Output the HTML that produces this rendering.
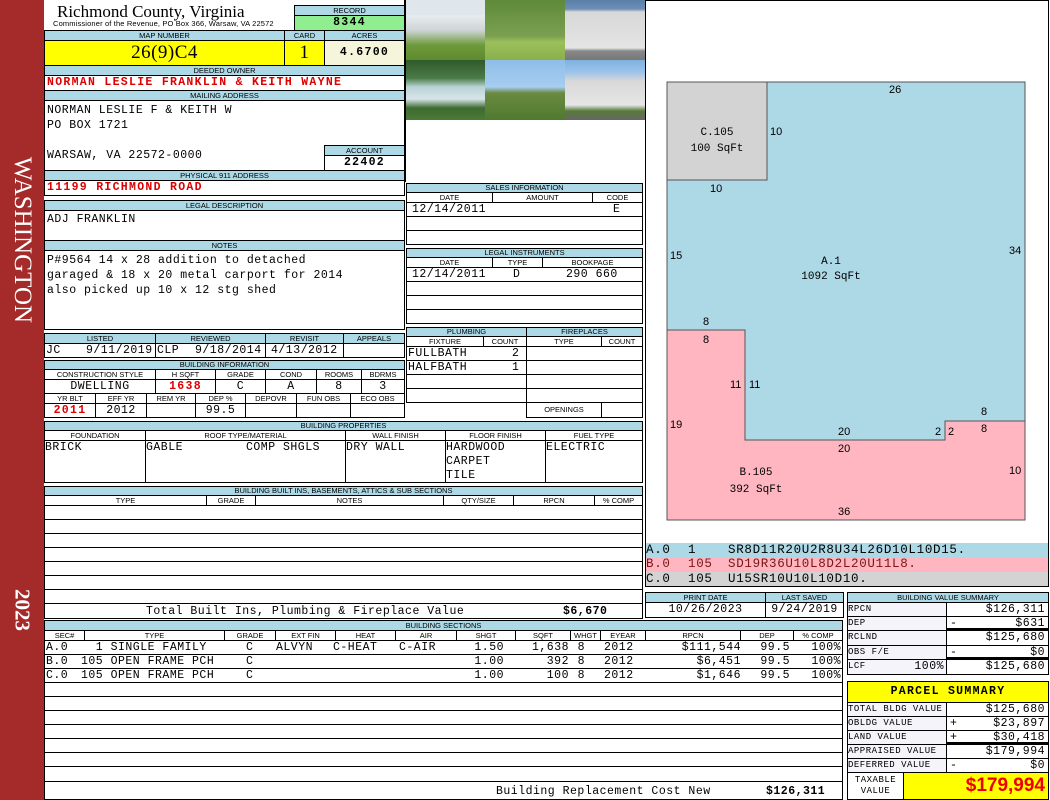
<!DOCTYPE html>
<html><head><meta charset="utf-8"><style>
*{margin:0;padding:0;box-sizing:border-box}
body{width:1050px;height:800px;position:relative;background:#fff;overflow:hidden;font-family:"Liberation Mono",monospace}
.a{position:absolute}
.h{position:absolute;background:#add8e6;border:1px solid #000;font:7.5px/8px "Liberation Sans",sans-serif;text-align:center;color:#000;overflow:hidden;white-space:nowrap}
.v{position:absolute;border:1px solid #000;background:#fff;font:11.5px/13px "Liberation Mono",monospace;letter-spacing:.5px;white-space:pre;overflow:hidden;color:#000}
.r{color:#d00;font-weight:bold;letter-spacing:1.3px}
.c{text-align:center}.rt{text-align:right;padding-right:3px}
.p{position:absolute;font:11.5px/13px "Liberation Mono",monospace;letter-spacing:.5px;white-space:pre}
.pr{position:absolute;font:11.5px/13px "Liberation Mono",monospace;letter-spacing:.5px;white-space:pre;text-align:right}
.k{position:absolute;font:12.5px/13px "Liberation Mono",monospace;letter-spacing:.7px;white-space:pre}
.lb{font-size:9px;background:#f4f4fa}
</style></head><body>
<!-- sidebar -->
<div class="a" style="left:0;top:0;width:44px;height:800px;background:#a52a2a"></div>
<div class="a" style="left:22px;top:240px;transform:translate(-50%,-50%) rotate(90deg);color:#fff;font:25px 'Liberation Serif',serif;white-space:nowrap">WASHINGTON</div>
<div class="a" style="left:22px;top:610px;transform:translate(-50%,-50%) rotate(90deg);color:#fff;font:bold 21px 'Liberation Serif',serif;white-space:nowrap">2023</div>

<!-- header -->
<div class="a" style="left:57px;top:2px;font:17px 'Liberation Serif',serif">Richmond County, Virginia</div>
<div class="a" style="left:53px;top:19px;font:7.5px 'Liberation Sans',sans-serif;letter-spacing:.15px;white-space:nowrap">Commissioner of the Revenue, PO Box 366, Warsaw, VA 22572</div>
<div class="h" style="left:294px;top:5px;width:111px;height:11px;line-height:9px">RECORD</div>
<div class="v c" style="left:294px;top:15px;width:111px;height:16px;background:#90ee90;font-weight:bold;line-height:14px;letter-spacing:1.3px">8344</div>
<div class="h" style="left:44px;top:30px;width:241px;height:11px;line-height:9px">MAP NUMBER</div>
<div class="h" style="left:284px;top:30px;width:41px;height:11px;line-height:9px">CARD</div>
<div class="h" style="left:324px;top:30px;width:81px;height:11px;line-height:9px">ACRES</div>
<div class="v c" style="left:44px;top:40px;width:241px;height:26px;background:#ffff00;font:19px/24px 'Liberation Serif',serif">26(9)C4</div>
<div class="v c" style="left:284px;top:40px;width:41px;height:26px;background:#ffff00;font:19px/24px 'Liberation Serif',serif">1</div>
<div class="v c" style="left:324px;top:40px;width:81px;height:26px;background:#f5f5dc;font-weight:bold;line-height:24px;letter-spacing:1.3px">4.6700</div>
<div class="h" style="left:44px;top:65px;width:361px;height:11px;line-height:9px">DEEDED OWNER</div>
<div class="v r" style="left:44px;top:75px;width:361px;height:16px;padding-left:2px">NORMAN LESLIE FRANKLIN &amp; KEITH WAYNE</div>
<div class="h" style="left:44px;top:90px;width:361px;height:11px;line-height:9px">MAILING ADDRESS</div>
<div class="v" style="left:44px;top:100px;width:361px;height:71px;padding:2px 0 0 2px;line-height:15px">NORMAN LESLIE F &amp; KEITH W
PO BOX 1721

WARSAW, VA 22572-0000</div>
<div class="h" style="left:324px;top:145px;width:81px;height:11px;line-height:9px">ACCOUNT</div>
<div class="v c" style="left:324px;top:155px;width:81px;height:16px;font-weight:bold;letter-spacing:1.3px">22402</div>
<div class="h" style="left:44px;top:170px;width:361px;height:11px;line-height:9px">PHYSICAL 911 ADDRESS</div>
<div class="v r" style="left:44px;top:180px;width:361px;height:16px;padding-left:2px">11199 RICHMOND ROAD</div>
<div class="h" style="left:44px;top:200px;width:361px;height:11px;line-height:9px">LEGAL DESCRIPTION</div>
<div class="v" style="left:44px;top:210px;width:361px;height:31px;padding:2px">ADJ FRANKLIN</div>
<div class="h" style="left:44px;top:240px;width:361px;height:11px;line-height:9px">NOTES</div>
<div class="v" style="left:44px;top:250px;width:361px;height:80px;padding:2px;line-height:15px">P#9564 14 x 28 addition to detached
garaged &amp; 18 x 20 metal carport for 2014
also picked up 10 x 12 stg shed</div>

<!-- listed -->
<div class="h" style="left:44px;top:333px;width:112px;height:11px;line-height:9px">LISTED</div>
<div class="h" style="left:155px;top:333px;width:111px;height:11px;line-height:9px">REVIEWED</div>
<div class="h" style="left:265px;top:333px;width:79px;height:11px;line-height:9px">REVISIT</div>
<div class="h" style="left:343px;top:333px;width:62px;height:11px;line-height:9px">APPEALS</div>
<div class="v" style="left:44px;top:343px;width:112px;height:15px"></div>
<div class="v" style="left:155px;top:343px;width:111px;height:15px"></div>
<div class="v" style="left:265px;top:343px;width:79px;height:15px"></div>
<div class="v" style="left:343px;top:343px;width:62px;height:15px"></div>
<div class="p" style="left:46px;top:344px">JC</div>
<div class="p" style="left:86px;top:344px">9/11/2019</div>
<div class="p" style="left:157px;top:344px">CLP</div>
<div class="p" style="left:195px;top:344px">9/18/2014</div>
<div class="p" style="left:271px;top:344px">4/13/2012</div>

<div class="h" style="left:44px;top:360px;width:361px;height:10px">BUILDING INFORMATION</div>
<div class="h" style="left:44px;top:369px;width:112px;height:11px;background:#fff;line-height:9px">CONSTRUCTION STYLE</div>
<div class="h" style="left:155px;top:369px;width:61px;height:11px;background:#fff;line-height:9px">H SQFT</div>
<div class="h" style="left:215px;top:369px;width:51px;height:11px;background:#fff;line-height:9px">GRADE</div>
<div class="h" style="left:265px;top:369px;width:52px;height:11px;background:#fff;line-height:9px">COND</div>
<div class="h" style="left:316px;top:369px;width:46px;height:11px;background:#fff;line-height:9px">ROOMS</div>
<div class="h" style="left:361px;top:369px;width:44px;height:11px;background:#fff;line-height:9px">BDRMS</div>
<div class="v c" style="left:44px;top:379px;width:112px;height:15px">DWELLING</div>
<div class="v c r" style="left:155px;top:379px;width:61px;height:15px">1638</div>
<div class="v c" style="left:215px;top:379px;width:51px;height:15px">C</div>
<div class="v c" style="left:265px;top:379px;width:52px;height:15px">A</div>
<div class="v c" style="left:316px;top:379px;width:46px;height:15px">8</div>
<div class="v c" style="left:361px;top:379px;width:44px;height:15px">3</div>
<div class="h" style="left:44px;top:393px;width:52px;height:11px;background:#fff;line-height:9px">YR BLT</div>
<div class="h" style="left:95px;top:393px;width:52px;height:11px;background:#fff;line-height:9px">EFF YR</div>
<div class="h" style="left:146px;top:393px;width:50px;height:11px;background:#fff;line-height:9px">REM YR</div>
<div class="h" style="left:195px;top:393px;width:51px;height:11px;background:#fff;line-height:9px">DEP %</div>
<div class="h" style="left:245px;top:393px;width:52px;height:11px;background:#fff;line-height:9px">DEPOVR</div>
<div class="h" style="left:296px;top:393px;width:55px;height:11px;background:#fff;line-height:9px">FUN OBS</div>
<div class="h" style="left:350px;top:393px;width:55px;height:11px;background:#fff;line-height:9px">ECO OBS</div>
<div class="v c r" style="left:44px;top:403px;width:52px;height:15px">2011</div>
<div class="v c" style="left:95px;top:403px;width:52px;height:15px">2012</div>
<div class="v" style="left:146px;top:403px;width:50px;height:15px"></div>
<div class="v c" style="left:195px;top:403px;width:51px;height:15px">99.5</div>
<div class="v" style="left:245px;top:403px;width:52px;height:15px"></div>
<div class="v" style="left:296px;top:403px;width:55px;height:15px"></div>
<div class="v" style="left:350px;top:403px;width:55px;height:15px"></div>

<!-- photos -->
<div class="a" style="left:405px;top:0;width:80px;height:60px;background:linear-gradient(#dfe6ec 0,#dfe6ec 25%,#e8ecee 25%,#cfd6d8 50%,#6e9a3a 75%,#5f8b2f)"></div>
<div class="a" style="left:485px;top:0;width:80px;height:60px;background:linear-gradient(#5e8a3a,#7aa050 60%,#9cbf5a 70%,#8ab04e)"></div>
<div class="a" style="left:565px;top:0;width:80px;height:60px;background:linear-gradient(#5a7fa8 0,#6d8fb5 15%,#d8d8d8 20%,#e4e4e4 80%,#888 85%,#777)"></div>
<div class="a" style="left:405px;top:60px;width:80px;height:60px;background:linear-gradient(#2f5a2a,#4a7a45 30%,#b8d4d6 45%,#d8e4e8 65%,#3d6b30 80%,#4c7a38)"></div>
<div class="a" style="left:485px;top:60px;width:80px;height:60px;background:linear-gradient(#8fbde8,#a7cdef 45%,#6a8a40 55%,#4f7a30)"></div>
<div class="a" style="left:565px;top:60px;width:80px;height:60px;background:linear-gradient(#7fb1e0,#9cc3ea 20%,#d8d8d8 35%,#e6e6e6 75%,#587a38 85%,#666)"></div>
<div class="a" style="left:404px;top:0;width:2px;height:182px;background:#000"></div>

<!-- sales -->
<div class="h" style="left:406px;top:183px;width:237px;height:10px">SALES INFORMATION</div>
<div class="h" style="left:406px;top:192px;width:87px;height:11px;background:#fff;line-height:9px">DATE</div>
<div class="h" style="left:492px;top:192px;width:101px;height:11px;background:#fff;line-height:9px">AMOUNT</div>
<div class="h" style="left:592px;top:192px;width:51px;height:11px;background:#fff;line-height:9px">CODE</div>
<div class="v" style="left:406px;top:202px;width:237px;height:15px"></div>
<div class="p" style="left:412px;top:203px">12/14/2011</div>
<div class="p" style="left:613px;top:203px">E</div>
<div class="v" style="left:406px;top:216px;width:237px;height:15px"></div>
<div class="v" style="left:406px;top:230px;width:237px;height:15px"></div>
<div class="h" style="left:406px;top:248px;width:237px;height:10px">LEGAL INSTRUMENTS</div>
<div class="h" style="left:406px;top:257px;width:87px;height:11px;background:#fff;line-height:9px">DATE</div>
<div class="h" style="left:492px;top:257px;width:51px;height:11px;background:#fff;line-height:9px">TYPE</div>
<div class="h" style="left:542px;top:257px;width:101px;height:11px;background:#fff;line-height:9px">BOOKPAGE</div>
<div class="v" style="left:406px;top:267px;width:237px;height:15px"></div>
<div class="p" style="left:412px;top:268px">12/14/2011</div>
<div class="p" style="left:513px;top:268px">D</div>
<div class="p" style="left:566px;top:268px">290 660</div>
<div class="v" style="left:406px;top:281px;width:237px;height:15px"></div>
<div class="v" style="left:406px;top:295px;width:237px;height:15px"></div>
<div class="v" style="left:406px;top:309px;width:237px;height:15px"></div>

<!-- plumbing -->
<div class="h" style="left:406px;top:327px;width:121px;height:10px">PLUMBING</div>
<div class="h" style="left:526px;top:327px;width:117px;height:10px">FIREPLACES</div>
<div class="h" style="left:406px;top:336px;width:78px;height:11px;background:#fff;line-height:9px">FIXTURE</div>
<div class="h" style="left:483px;top:336px;width:44px;height:11px;background:#fff;line-height:9px">COUNT</div>
<div class="h" style="left:526px;top:336px;width:76px;height:11px;background:#fff;line-height:9px">TYPE</div>
<div class="h" style="left:601px;top:336px;width:42px;height:11px;background:#fff;line-height:9px">COUNT</div>
<div class="v" style="left:406px;top:346px;width:121px;height:15px"></div>
<div class="v" style="left:406px;top:360px;width:121px;height:15px"></div>
<div class="p" style="left:408px;top:347px">FULLBATH</div><div class="p" style="left:512px;top:347px">2</div>
<div class="p" style="left:408px;top:361px">HALFBATH</div><div class="p" style="left:512px;top:361px">1</div>
<div class="v" style="left:406px;top:374px;width:121px;height:15px"></div>
<div class="v" style="left:406px;top:388px;width:121px;height:15px"></div>
<div class="v" style="left:526px;top:346px;width:117px;height:15px"></div>
<div class="v" style="left:526px;top:360px;width:117px;height:15px"></div>
<div class="v" style="left:526px;top:374px;width:117px;height:15px"></div>
<div class="v" style="left:526px;top:388px;width:117px;height:15px"></div>
<div class="h" style="left:526px;top:402px;width:76px;height:16px;background:#fff;line-height:14px">OPENINGS</div>
<div class="v" style="left:601px;top:402px;width:42px;height:16px"></div>

<!-- building properties -->
<div class="h" style="left:44px;top:421px;width:599px;height:10px">BUILDING PROPERTIES</div>
<div class="h" style="left:44px;top:430px;width:102px;height:11px;background:#fff;line-height:9px">FOUNDATION</div>
<div class="h" style="left:145px;top:430px;width:201px;height:11px;background:#fff;line-height:9px">ROOF TYPE/MATERIAL</div>
<div class="h" style="left:345px;top:430px;width:101px;height:11px;background:#fff;line-height:9px">WALL FINISH</div>
<div class="h" style="left:445px;top:430px;width:101px;height:11px;background:#fff;line-height:9px">FLOOR FINISH</div>
<div class="h" style="left:545px;top:430px;width:98px;height:11px;background:#fff;line-height:9px">FUEL TYPE</div>
<div class="v" style="left:44px;top:440px;width:102px;height:43px;line-height:14px">BRICK</div>
<div class="v" style="left:145px;top:440px;width:201px;height:43px;line-height:14px">GABLE</div>
<div class="p" style="left:246px;top:441px;line-height:14px">COMP SHGLS</div>
<div class="v" style="left:345px;top:440px;width:101px;height:43px;line-height:14px">DRY WALL</div>
<div class="v" style="left:445px;top:440px;width:101px;height:43px;line-height:14px">HARDWOOD
CARPET
TILE</div>
<div class="v" style="left:545px;top:440px;width:98px;height:43px;line-height:14px">ELECTRIC</div>

<!-- built-ins -->
<div class="h" style="left:44px;top:486px;width:599px;height:10px">BUILDING BUILT INS, BASEMENTS, ATTICS &amp; SUB SECTIONS</div>
<div class="h" style="left:44px;top:495px;width:163px;height:11px;background:#fff;line-height:9px">TYPE</div>
<div class="h" style="left:206px;top:495px;width:50px;height:11px;background:#fff;line-height:9px">GRADE</div>
<div class="h" style="left:255px;top:495px;width:189px;height:11px;background:#fff;line-height:9px">NOTES</div>
<div class="h" style="left:443px;top:495px;width:71px;height:11px;background:#fff;line-height:9px">QTY/SIZE</div>
<div class="h" style="left:513px;top:495px;width:82px;height:11px;background:#fff;line-height:9px">RPCN</div>
<div class="h" style="left:594px;top:495px;width:49px;height:11px;background:#fff;line-height:9px">% COMP</div>
<div class="v" style="left:44px;top:505px;width:599px;height:15px"></div>
<div class="v" style="left:44px;top:519px;width:599px;height:15px"></div>
<div class="v" style="left:44px;top:533px;width:599px;height:15px"></div>
<div class="v" style="left:44px;top:547px;width:599px;height:15px"></div>
<div class="v" style="left:44px;top:561px;width:599px;height:15px"></div>
<div class="v" style="left:44px;top:575px;width:599px;height:15px"></div>
<div class="v" style="left:44px;top:589px;width:599px;height:15px"></div>
<div class="v" style="left:44px;top:603px;width:599px;height:16px"></div>
<div class="p" style="left:146px;top:605px">Total Built Ins, Plumbing &amp; Fireplace Value</div>
<div class="p" style="left:563px;top:605px;font-weight:bold">$6,670</div>

<!-- building sections -->
<div class="h" style="left:44px;top:620px;width:799px;height:11px;line-height:9px">BUILDING SECTIONS</div>
<div class="h" style="left:44px;top:630px;width:41px;height:11px;background:#fff;line-height:9px">SEC#</div>
<div class="h" style="left:84px;top:630px;width:141px;height:11px;background:#fff;line-height:9px">TYPE</div>
<div class="h" style="left:224px;top:630px;width:52px;height:11px;background:#fff;line-height:9px">GRADE</div>
<div class="h" style="left:275px;top:630px;width:61px;height:11px;background:#fff;line-height:9px">EXT FIN</div>
<div class="h" style="left:335px;top:630px;width:61px;height:11px;background:#fff;line-height:9px">HEAT</div>
<div class="h" style="left:395px;top:630px;width:62px;height:11px;background:#fff;line-height:9px">AIR</div>
<div class="h" style="left:456px;top:630px;width:60px;height:11px;background:#fff;line-height:9px">SHGT</div>
<div class="h" style="left:515px;top:630px;width:56px;height:11px;background:#fff;line-height:9px">SQFT</div>
<div class="h" style="left:570px;top:630px;width:31px;height:11px;background:#fff;line-height:9px">WHGT</div>
<div class="h" style="left:600px;top:630px;width:46px;height:11px;background:#fff;line-height:9px">EYEAR</div>
<div class="h" style="left:645px;top:630px;width:96px;height:11px;background:#fff;line-height:9px">RPCN</div>
<div class="h" style="left:740px;top:630px;width:54px;height:11px;background:#fff;line-height:9px">DEP</div>
<div class="h" style="left:793px;top:630px;width:50px;height:11px;background:#fff;line-height:9px">% COMP</div>
<div class="v" style="left:44px;top:640px;width:799px;height:15px"></div>
<div class="v" style="left:44px;top:654px;width:799px;height:15px"></div>
<div class="v" style="left:44px;top:668px;width:799px;height:15px"></div>
<div class="p" style="left:46px;top:641px">A.0</div><div class="p" style="left:81px;top:641px">  1 SINGLE FAMILY</div>
<div class="p" style="left:246px;top:641px">C</div><div class="p" style="left:276px;top:641px">ALVYN</div>
<div class="p" style="left:333px;top:641px">C-HEAT</div><div class="p" style="left:399px;top:641px">C-AIR</div>
<div class="pr" style="right:546px;top:641px">1.50</div><div class="pr" style="right:481px;top:641px">1,638</div>
<div class="pr" style="right:465px;top:641px">8</div><div class="p" style="left:604px;top:641px">2012</div>
<div class="pr" style="right:309px;top:641px">$111,544</div><div class="pr" style="right:260px;top:641px">99.5</div><div class="pr" style="right:209px;top:641px">100%</div>
<div class="p" style="left:46px;top:655px">B.0</div><div class="p" style="left:81px;top:655px">105 OPEN FRAME PCH</div>
<div class="p" style="left:246px;top:655px">C</div>
<div class="pr" style="right:546px;top:655px">1.00</div><div class="pr" style="right:481px;top:655px">392</div>
<div class="pr" style="right:465px;top:655px">8</div><div class="p" style="left:604px;top:655px">2012</div>
<div class="pr" style="right:309px;top:655px">$6,451</div><div class="pr" style="right:260px;top:655px">99.5</div><div class="pr" style="right:209px;top:655px">100%</div>
<div class="p" style="left:46px;top:669px">C.0</div><div class="p" style="left:81px;top:669px">105 OPEN FRAME PCH</div>
<div class="p" style="left:246px;top:669px">C</div>
<div class="pr" style="right:546px;top:669px">1.00</div><div class="pr" style="right:481px;top:669px">100</div>
<div class="pr" style="right:465px;top:669px">8</div><div class="p" style="left:604px;top:669px">2012</div>
<div class="pr" style="right:309px;top:669px">$1,646</div><div class="pr" style="right:260px;top:669px">99.5</div><div class="pr" style="right:209px;top:669px">100%</div>
<div class="v" style="left:44px;top:682px;width:799px;height:15px"></div>
<div class="v" style="left:44px;top:696px;width:799px;height:15px"></div>
<div class="v" style="left:44px;top:710px;width:799px;height:15px"></div>
<div class="v" style="left:44px;top:724px;width:799px;height:15px"></div>
<div class="v" style="left:44px;top:738px;width:799px;height:15px"></div>
<div class="v" style="left:44px;top:752px;width:799px;height:15px"></div>
<div class="v" style="left:44px;top:766px;width:799px;height:16px"></div>
<div class="v" style="left:44px;top:781px;width:799px;height:19px"></div>
<div class="p" style="left:496px;top:785px">Building Replacement Cost New</div>
<div class="p" style="left:766px;top:785px;font-weight:bold">$126,311</div>

<!-- sketch -->
<div class="a" style="left:645px;top:0;width:404px;height:544px;border:1px solid #000"></div>
<svg class="a" style="left:0;top:0" width="1050" height="800">
<polygon points="667,82 767,82 767,180 667,180" fill="#d3d3d3" stroke="#555"/>
<polygon points="767,82 1025,82 1025,421 945,421 945,440 745,440 745,330 667,330 667,180 767,180" fill="#add8e6" stroke="#555"/>
<polygon points="667,330 745,330 745,440 945,440 945,421 1025,421 1025,520 667,520" fill="#ffb6c1" stroke="#555"/>
<g font-family="Liberation Sans,sans-serif" font-size="11" fill="#000">
<text x="889" y="93">26</text><text x="770" y="135">10</text><text x="710" y="192">10</text>
<text x="670" y="259">15</text><text x="1009" y="254">34</text><text x="703" y="325">8</text>
<text x="703" y="343">8</text><text x="730" y="388">11</text><text x="749" y="388">11</text>
<text x="670" y="428">19</text><text x="838" y="435">20</text><text x="838" y="452">20</text>
<text x="935" y="435">2</text><text x="948" y="435">2</text><text x="981" y="415">8</text><text x="981" y="432">8</text>
<text x="1009" y="474">10</text><text x="838" y="515">36</text>
</g>
<g font-family="Liberation Mono,monospace" font-size="11" text-anchor="middle">
<text x="717" y="135">C.105</text><text x="717" y="151">100 SqFt</text>
<text x="831" y="264">A.1</text><text x="831" y="279">1092 SqFt</text>
<text x="756" y="475">B.105</text><text x="756" y="492">392 SqFt</text>
</g>
</svg>
<div class="v" style="left:645px;top:543px;width:404px;height:15px;background:#add8e6;border-width:0 1px"></div>
<div class="v" style="left:645px;top:557px;width:404px;height:15px;background:#ffb6c1;border-width:0 1px"></div>
<div class="v" style="left:645px;top:572px;width:404px;height:15px;background:#d3d3d3;border-width:0 1px 1px"></div>
<div class="k" style="left:646px;top:544px">A.0</div><div class="k" style="left:688px;top:544px">1</div><div class="k" style="left:728px;top:544px">SR8D11R20U2R8U34L26D10L10D15.</div>
<div class="k" style="left:646px;top:558px;color:#7a1414">B.0</div><div class="k" style="left:688px;top:558px;color:#7a1414">105</div><div class="k" style="left:728px;top:558px;color:#7a1414">SD19R36U10L8D2L20U11L8.</div>
<div class="k" style="left:646px;top:573px">C.0</div><div class="k" style="left:688px;top:573px">105</div><div class="k" style="left:728px;top:573px">U15SR10U10L10D10.</div>

<!-- print date -->
<div class="h" style="left:645px;top:592px;width:121px;height:11px;line-height:9px">PRINT DATE</div>
<div class="h" style="left:765px;top:592px;width:79px;height:11px;line-height:9px">LAST SAVED</div>
<div class="v c" style="left:645px;top:602px;width:121px;height:16px">10/26/2023</div>
<div class="v c" style="left:765px;top:602px;width:79px;height:16px">9/24/2019</div>

<!-- building value summary -->
<div class="h" style="left:847px;top:592px;width:202px;height:11px;line-height:9px">BUILDING VALUE SUMMARY</div>
<div class="v lb" style="left:847px;top:602px;width:100px;height:15px">RPCN</div>
<div class="v rt" style="left:946px;top:602px;width:103px;height:15px">$126,311</div>
<div class="v lb" style="left:847px;top:616px;width:100px;height:15px">DEP</div>
<div class="v rt" style="left:946px;top:616px;width:103px;height:15px;border-bottom-width:3px"><span style="float:left;padding-left:3px">-</span>$631</div>
<div class="v lb" style="left:847px;top:630px;width:100px;height:16px">RCLND</div>
<div class="v rt" style="left:946px;top:630px;width:103px;height:16px">$125,680</div>
<div class="v lb" style="left:847px;top:645px;width:100px;height:15px">OBS F/E</div>
<div class="v rt" style="left:946px;top:645px;width:103px;height:15px;border-bottom-width:3px"><span style="float:left;padding-left:3px">-</span>$0</div>
<div class="v lb" style="left:847px;top:659px;width:100px;height:16px">LCF<span style="float:right;font-size:11.5px;padding-right:2px">100%</span></div>
<div class="v rt" style="left:946px;top:659px;width:103px;height:16px">$125,680</div>

<!-- parcel summary -->
<div class="v c" style="left:847px;top:681px;width:202px;height:22px;background:#ffff00;font-weight:bold;line-height:20px;letter-spacing:1.3px">PARCEL SUMMARY</div>
<div class="v lb" style="left:847px;top:702px;width:100px;height:15px">TOTAL BLDG VALUE</div>
<div class="v rt" style="left:946px;top:702px;width:103px;height:15px">$125,680</div>
<div class="v lb" style="left:847px;top:716px;width:100px;height:15px">OBLDG VALUE</div>
<div class="v rt" style="left:946px;top:716px;width:103px;height:15px"><span style="float:left;padding-left:3px">+</span>$23,897</div>
<div class="v lb" style="left:847px;top:730px;width:100px;height:15px">LAND VALUE</div>
<div class="v rt" style="left:946px;top:730px;width:103px;height:15px;border-bottom-width:3px"><span style="float:left;padding-left:3px">+</span>$30,418</div>
<div class="v lb" style="left:847px;top:744px;width:100px;height:15px">APPRAISED VALUE</div>
<div class="v rt" style="left:946px;top:744px;width:103px;height:15px">$179,994</div>
<div class="v lb" style="left:847px;top:758px;width:100px;height:15px">DEFERRED VALUE</div>
<div class="v rt" style="left:946px;top:758px;width:103px;height:15px"><span style="float:left;padding-left:3px">-</span>$0</div>
<div class="v c" style="left:847px;top:772px;width:57px;height:28px;font-size:9px;line-height:11px;padding-top:2px">TAXABLE
VALUE</div>
<div class="v" style="left:903px;top:772px;width:146px;height:28px;background:#ffff00;color:#e00;font:bold 19px/26px 'Liberation Sans',sans-serif;text-align:right;padding-right:3px;letter-spacing:0">$179,994</div>
</body></html>
